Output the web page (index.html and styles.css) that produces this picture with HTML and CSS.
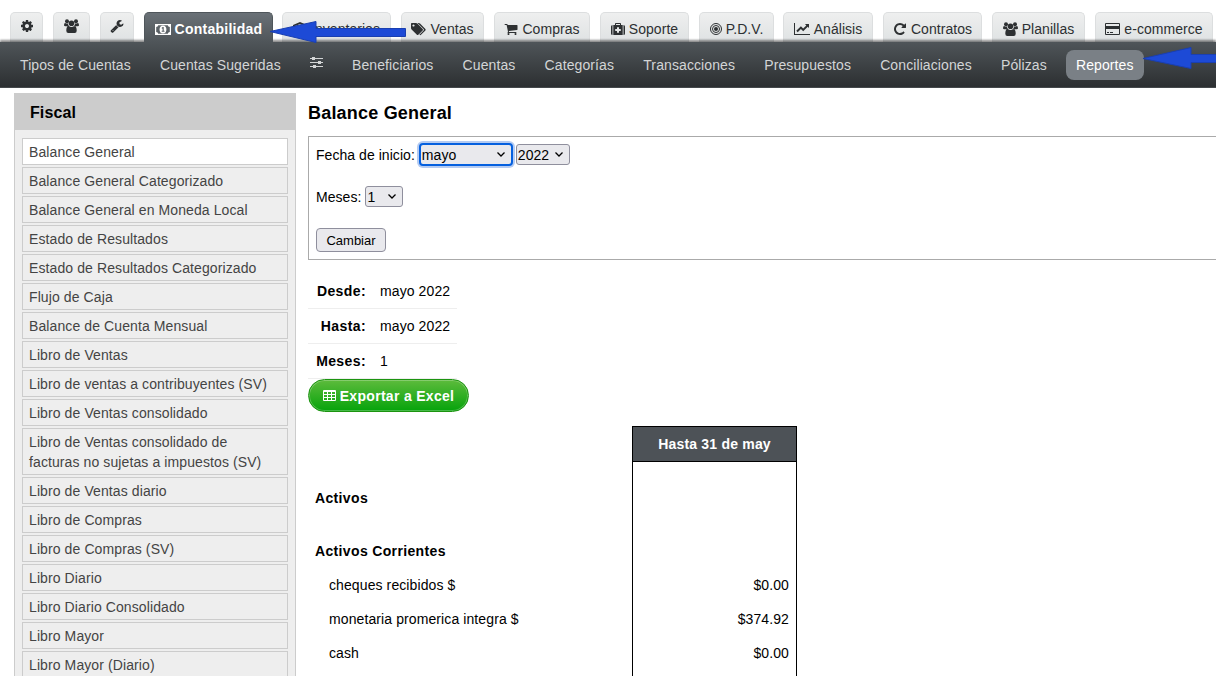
FILE: index.html
```html
<!DOCTYPE html>
<html lang="es">
<head>
<meta charset="UTF-8" />
<meta name="viewport" content="width=device-width, initial-scale=1" />
<title>Balance General</title>
<link rel="stylesheet" href="styles.css">
</head>
<body>
  <!-- Icons -->
  <svg class="sprite" aria-hidden="true">
    <symbol id="i-cog" viewBox="0 0 1792 1792"><path d="M1152 896q0-106-75-181t-181-75-181 75-75 181 75 181 181 75 181-75 75-181zm512-109v222q0 12-8 23t-20 13l-185 28q-19 54-39 91 35 50 107 138 10 12 10 25t-9 23q-27 37-99 108t-94 71q-12 0-26-9l-138-108q-44 23-91 38-16 136-29 186-7 28-36 28h-222q-14 0-24.5-8.5t-11.5-21.5l-28-184q-49-16-90-37l-141 107q-10 9-25 9-14 0-25-11-126-114-165-168-7-10-7-23 0-12 8-23 15-21 51-66.5t54-70.5q-27-50-41-99l-183-27q-13-2-21-12.5t-8-23.5v-222q0-12 8-23t19-13l186-28q14-46 39-92-40-57-107-138-10-12-10-24 0-10 9-23 26-36 98.5-107.5t94.5-71.5q13 0 26 10l138 107q44-23 91-38 16-136 29-186 7-28 36-28h222q14 0 24.5 8.5t11.5 21.5l28 184q49 16 90 37l142-107q9-9 24-9 13 0 25 10 129 119 165 170 7 8 7 22 0 12-8 23-15 21-51 66.5t-54 70.5q26 50 41 98l183 28q13 2 21 12.5t8 23.5z"/></symbol>
    <symbol id="i-users" viewBox="0 0 15 14"><circle cx="3" cy="2.3" r="2"/><circle cx="12" cy="2.3" r="2"/><circle cx="7.5" cy="4.2" r="2.800"/><path d="M0 6.200Q0 4 1.200 4q1.300.9 2.700.5Q4 6.200 5.200 7.200H1.500Q0 7.200 0 6.200zM15 6.200Q15 4 13.800 4q-1.300.9-2.700.5Q11 6.200 9.800 7.200h3.700Q15 7.200 15 6.200zM2.300 11.800Q2.300 7 4.600 7q2.900 2 5.800 0 2.300 0 2.300 4.800Q12.700 14 10.700 14H4.300Q2.300 14 2.300 11.800z"/></symbol>
    <symbol id="i-wrench" viewBox="0 0 1792 1792"><path d="M448 1472q0-26-19-45t-45-19-45 19-19 45 19 45 45 19 45-19 19-45zm644-420l-682 682q-37 37-90 37-52 0-91-37l-106-108q-38-36-38-90 0-53 38-91l681-681q39 98 114.500 173.500t173.500 114.500zm634-435q0 39-23 106-47 134-164.500 217.500t-258.500 83.500q-185 0-316.500-131.500t-131.500-316.500 131.500-316.500 316.500-131.500q58 0 121.500 16.500t107.500 46.500q16 11 16 28t-16 28l-293 169v224l193 107q5-3 79-48.500t135.500-81 70.500-35.500q15 0 23.500 10t8.500 25z"/></symbol>
    <symbol id="i-money" viewBox="0 0 16 11"><path fill-rule="evenodd" d="M0 0h16v11H0zM3.200 1.200Q3 2.800 1.200 3v5q1.800.2 2 1.800h9.600q.2-1.600 2-1.800V3q-1.800-.2-2-1.800z"/><path fill-rule="evenodd" d="M8 1.400c4.600 0 4.600 8.200 0 8.200s-4.600-8.200 0-8.200zM6.500 4l.7.700.4-.3v2.400h-.9v.9h2.800v-.9h-.8V3h-1z"/></symbol>
    <symbol id="i-cube" viewBox="0 0 14 14"><path d="M7 0l7 3v8l-7 3-7-3V3zM2 4l5 2 5-2-5-2z"/></symbol>
    <symbol id="i-tags" viewBox="0 0 15 13"><path fill-rule="evenodd" d="M.8 0H5q.7 0 1.300.6L11.700 6q.6.700 0 1.400l-4.400 4.400q-.7.600-1.400 0L.6 6.400Q0 5.800 0 5V.8Q0 0 .8 0zM2.500 1.400a1.100 1.100 0 1 0 .01 0z"/><path d="M6.500 0h1.200q.7 0 1.300.6L14.400 6q.6.700 0 1.400L10 11.800q-.8.700-1.600-.1l4.200-4.300q.7-.7 0-1.400z"/></symbol>
    <symbol id="i-cart" viewBox="0 0 1792 1792"><path d="M704 1536q0 52-38 90t-90 38-90-38-38-90 38-90 90-38 90 38 38 90zm896 0q0 52-38 90t-90 38-90-38-38-90 38-90 90-38 90 38 38 90zm128-1088v512q0 24-16.500 42.500t-40.500 21.500l-1044 122q13 60 13 70 0 16-24 64h920q26 0 45 19t19 45-19 45-45 19h-1024q-26 0-45-19t-19-45q0-11 8-31.500t16-36 21.500-40 15.500-29.500l-177-823h-204q-26 0-45-19t-19-45 19-45 45-19h256q16 0 28.500 6.500t19.500 15.500 13 24.500 8 26 5.500 29.500 4.500 26h1201q26 0 45 19t19 45z"/></symbol>
    <symbol id="i-medkit" viewBox="0 0 14 12"><path d="M0 3.500Q0 2 1.500 2v10Q0 12 0 10.500zM12.500 2Q14 2 14 3.500v7q0 1.500-1.500 1.500z"/><path fill-rule="evenodd" d="M2.300 2H4V.8Q4 0 4.800 0h4.400q.8 0 .8.800V2h1.700v10H2.300zM5 1v1h4V1zM6 4.200v1.700H4.200v2H6v1.800h2V7.900h1.800v-2H8V4.200z"/></symbol>
    <symbol id="i-bullseye" viewBox="0 0 12 12"><g fill="none" stroke="currentColor"><circle cx="6" cy="6" r="5.500"/><circle cx="6" cy="6" r="3.500"/></g><circle cx="6" cy="6" r="2"/></symbol>
    <symbol id="i-chart" viewBox="0 0 16 12"><path d="M0 0h1v11h15v1H0z"/><path d="M11 1h4v4l-1.300-1.200-4.500 4.400-2.300-2.200-3.200 3.200L2.300 7.800l4.600-4.500 2.300 2.200 3.100-3.100z"/></symbol>
    <symbol id="i-repeat" viewBox="0 0 1792 1792"><path d="M1664 256v448q0 26-19 45t-45 19h-448q-42 0-59-40-17-39 14-69l138-138q-148-137-349-137-104 0-198.500 40.500t-163.500 109.500-109.500 163.500-40.500 198.500 40.500 198.500 109.500 163.500 163.500 109.500 198.500 40.500q119 0 225-52t179-147q7-10 23-12 15 0 25 9l137 138q9 8 9.500 20.500t-7.500 22.500q-109 132-264 204.500t-327 72.500q-156 0-298-61t-245-164-164-245-61-298 61-298 164-245 245-164 298-61q147 0 284.500 55.500t244.500 156.500l130-129q29-31 70-14 39 17 39 59z"/></symbol>
    <symbol id="i-card" viewBox="0 0 15 12"><path fill-rule="evenodd" d="M1 0h13q1 0 1 1v10q0 1-1 1H1q-1 0-1-1V1q0-1 1-1zM1 1v2h13V1zM1 6v5h13V6z"/><path d="M2 9h2v1H2zM5 9h3v1H5z"/></symbol>
    <symbol id="i-sliders" viewBox="0 0 13 12"><path d="M0 1h13v1H0zM0 5h13v1H0zM0 9h13v1H0zM2 0h3v3H2zM8 4h3v3H8zM3 8h3v3H3z"/></symbol>
    <symbol id="i-table" viewBox="0 0 13 11"><path fill-rule="evenodd" d="M1 0h11q1 0 1 1v9q0 1-1 1H1q-1 0-1-1V1q0-1 1-1zM1 2v2h3V2zM5 2v2h3V2zM9 2v2h3V2zM1 5v2h3V5zM5 5v2h3V5zM9 5v2h3V5zM1 8v2h3V8zM5 8v2h3V8zM9 8v2h3V8z"/></symbol>
  </svg>

  <header class="header">
    <nav class="tabs">
      <a class="tab tab-config"><svg class="i14"><use href="#i-cog"/></svg></a>
      <a class="tab tab-users"><svg class="i15"><use href="#i-users"/></svg></a>
      <a class="tab tab-tools"><svg class="i14"><use href="#i-wrench"/></svg></a>
      <a class="tab tab-conta active"><svg class="i-money"><use href="#i-money"/></svg>Contabilidad</a>
      <a class="tab tab-inv"><svg class="i14"><use href="#i-cube"/></svg>Inventarios</a>
      <a class="tab tab-ventas"><svg class="i-tags"><use href="#i-tags"/></svg>Ventas</a>
      <a class="tab tab-compras"><svg class="i14"><use href="#i-cart"/></svg>Compras</a>
      <a class="tab tab-soporte"><svg class="i-kit"><use href="#i-medkit"/></svg>Soporte</a>
      <a class="tab tab-pdv"><svg class="i12"><use href="#i-bullseye"/></svg>P.D.V.</a>
      <a class="tab tab-analisis"><svg class="i-chart"><use href="#i-chart"/></svg>Análisis</a>
      <a class="tab tab-contratos"><svg class="i14"><use href="#i-repeat"/></svg>Contratos</a>
      <a class="tab tab-planillas"><svg class="i15"><use href="#i-users"/></svg>Planillas</a>
      <a class="tab tab-ecom"><svg class="i-card"><use href="#i-card"/></svg>e-commerce</a>
    </nav>
    <nav class="subnav">
      <a>Tipos de Cuentas</a>
      <a>Cuentas Sugeridas</a>
      <a class="sliders"><svg><use href="#i-sliders"/></svg></a>
      <a>Beneficiarios</a>
      <a>Cuentas</a>
      <a>Categorías</a>
      <a>Transacciones</a>
      <a>Presupuestos</a>
      <a>Conciliaciones</a>
      <a>Pólizas</a>
      <a class="selected">Reportes</a>
    </nav>
    <svg class="arrow arrow-conta" viewBox="0 0 136 22"><path d="M0 10.500L46 .5v7h89.500v8H46v6z"/></svg>
    <svg class="arrow arrow-reportes" viewBox="0 0 73 22"><path d="M0 11.500L48 .5v7h30v8H48v6z"/></svg>
  </header>

  <div class="page">
    <aside class="sidebar">
      <h2>Fiscal</h2>
      <ul>
        <li class="current">Balance General</li>
        <li>Balance General Categorizado</li>
        <li>Balance General en Moneda Local</li>
        <li>Estado de Resultados</li>
        <li>Estado de Resultados Categorizado</li>
        <li>Flujo de Caja</li>
        <li>Balance de Cuenta Mensual</li>
        <li>Libro de Ventas</li>
        <li>Libro de ventas a contribuyentes (SV)</li>
        <li>Libro de Ventas consolidado</li>
        <li>Libro de Ventas consolidado de facturas no sujetas a impuestos (SV)</li>
        <li>Libro de Ventas diario</li>
        <li>Libro de Compras</li>
        <li>Libro de Compras (SV)</li>
        <li>Libro Diario</li>
        <li>Libro Diario Consolidado</li>
        <li>Libro Mayor</li>
        <li>Libro Mayor (Diario)</li>
      </ul>
    </aside>

    <main class="content">
      <h1>Balance General</h1>
      <form class="filters">
        <div class="row">
          <label>Fecha de inicio:</label>
          <span class="select month focus">mayo<svg viewBox="0 0 8 5"><path d="M.5.500L4 4 7.500.500"/></svg></span>
          <span class="select year">2022<svg viewBox="0 0 8 5"><path d="M.5.500L4 4 7.500.500"/></svg></span>
        </div>
        <div class="row">
          <label>Meses:</label>
          <span class="select count">1<svg viewBox="0 0 8 5"><path d="M.5.500L4 4 7.500.500"/></svg></span>
        </div>
        <button type="button">Cambiar</button>
      </form>

      <dl class="summary">
        <div><dt>Desde:</dt><dd>mayo 2022</dd></div>
        <div><dt>Hasta:</dt><dd>mayo 2022</dd></div>
        <div><dt>Meses:</dt><dd>1</dd></div>
      </dl>
      <a class="export"><svg><use href="#i-table"/></svg>Exportar a Excel</a>

      <table class="report">
        <thead>
          <tr><th></th><th class="amount">Hasta 31 de may</th></tr>
        </thead>
        <tbody>
          <tr class="group first"><td>Activos</td><td class="amount"></td></tr>
          <tr class="group"><td>Activos Corrientes</td><td class="amount"></td></tr>
          <tr><td>cheques recibidos $</td><td class="amount">$0.00</td></tr>
          <tr><td>monetaria promerica integra $</td><td class="amount">$374.92</td></tr>
          <tr><td>cash</td><td class="amount">$0.00</td></tr>
          <tr><td></td><td class="amount"></td></tr>
        </tbody>
      </table>
    </main>
  </div>
</body>
</html>
```
FILE: styles.css
```css
* {
  box-sizing: border-box;
}
body {
  margin: 0;
  height: 676px;
  overflow: hidden;
  font-family: "Liberation Sans", Arial, sans-serif;
  font-size: 14px;
  letter-spacing: 0.1px;
  color: #000;
  background: #fff;
}
svg {
  fill: currentColor;
  flex: none;
}
.sprite {
  position: absolute;
  width: 0;
  height: 0;
}
/* Header tabs */
.header {
  position: relative;
  height: 88px;
}
.tabs {
  display: flex;
  gap: 10px;
  height: 42px;
  padding: 12px 0 0 10px;
}
.tab {
  display: flex;
  flex: none;
  align-items: center;
  justify-content: center;
  gap: 4px;
  height: 30px;
  padding-top: 3px;
  border: 1px solid #dcdedf;
  border-bottom: 0;
  border-radius: 5px 5px 0 0;
  background: linear-gradient(#eeefef, #dfe2e3);
  color: #2d3032;
  letter-spacing: 0.05px;
  white-space: nowrap;
}
.tab.active {
  position: relative;
  z-index: 2;
  border-color: #4f565b;
  background: linear-gradient(#6a7177, #4f5559);
  color: #fff;
  font-weight: bold;
  letter-spacing: 0.25px;
}
.tab-config, .tab-users, .tab-tools {
  padding: 0 0 3px;
}
.tab-config { width: 33px; }
.tab-users { width: 37px; }
.tab-tools { width: 34px; }
.tab-conta { width: 129px; }
.tab-inv { width: 109px; margin-left: -1px; }
.tab-ventas { width: 83px; }
.tab-compras { width: 96px; }
.tab-soporte { width: 89px; }
.tab-pdv { width: 75px; }
.tab-analisis { width: 90px; margin-left: -1px; }
.tab-contratos { width: 99px; }
.tab-planillas { width: 93px; }
.tab-ecom { width: 118px; }
.i14 { width: 14px; height: 14px; }
.i15 { width: 15px; height: 14px; }
.i12 { width: 12px; height: 12px; }
.i-money { width: 16px; height: 11px; }
.i-tags { width: 15px; height: 13px; }
.i-kit { width: 14px; height: 12px; }
.i-chart { width: 16px; height: 12px; }
.i-card { width: 15px; height: 12px; }
/* Second level */
.subnav {
  position: relative;
  display: flex;
  align-items: center;
  gap: 9.15px;
  height: 46px;
  padding-left: 10px;
  border-bottom: 1px solid #45494c;
  background: linear-gradient(#4f5559, #2c2f31);
  box-shadow: 0 -2px 2px rgba(0, 0, 0, 0.45);
  color: #d3d5d6;
}
.subnav a {
  height: 30px;
  padding: 0 10px;
  line-height: 30px;
  white-space: nowrap;
}
.subnav .sliders svg {
  display: block;
  width: 13px;
  height: 12px;
  margin-top: 7px;
}
.subnav .selected {
  border-radius: 8px;
  background: #7a8086;
  color: #fff;
}
/* Arrows pointing at the open section */
.arrow {
  position: absolute;
  z-index: 3;
  height: 22px;
  fill: #1d4ad6;
  stroke: #1a3fb0;
  stroke-width: 1;
}
.arrow-conta {
  left: 270px;
  top: 21px;
  width: 136px;
}
.arrow-reportes {
  left: 1143px;
  top: 47px;
  width: 73px;
}
/* Layout */
.page {
  display: flex;
  gap: 12px;
  padding: 5px 0 0 14px;
}
.sidebar {
  flex: none;
  width: 282px;
  border: 1px solid #ccc;
  background: #eee;
}
.sidebar h2 {
  height: 36px;
  margin: 0;
  padding-left: 15px;
  background: #ccc;
  font-size: 16px;
  line-height: 37px;
}
.sidebar ul {
  display: grid;
  gap: 2px;
  margin: 0;
  padding: 8px 7px;
  list-style: none;
}
.sidebar li {
  padding: 3px 16px 2px 6px;
  border: 1px solid #ccc;
  color: #444;
  line-height: 20px;
}
.sidebar .current {
  background: #fff;
}
/* Main column */
.content {
  flex: 1;
  min-width: 0;
}
.content h1 {
  height: 43px;
  margin: 0;
  font-size: 18px;
  letter-spacing: 0.2px;
  line-height: 41px;
}
.filters {
  height: 124px;
  padding: 7px;
  border: 1px solid #aaa;
  border-right: 0;
  letter-spacing: 0.05px;
}
.row {
  display: flex;
  align-items: center;
  height: 21px;
  margin-bottom: 21px;
}
.select {
  display: flex;
  align-items: center;
  justify-content: space-between;
  height: 21px;
  padding: 0 6px 0 1px;
  border: 1px solid #8f8f9d;
  border-radius: 3px;
  background: #e9e9ed;
}
.select svg {
  width: 8px;
  height: 5px;
  fill: none;
  stroke: #000;
  stroke-width: 1.3;
}
.month {
  width: 94px;
  margin: 0 3px 0 4px;
}
.focus {
  height: 23px;
  padding: 0 6px 0 1px;
  border: 2px solid #0560df;
  border-radius: 4px;
  box-shadow: 0 0 0 2px #b4cbf2;
}
.year { width: 54px; }
.count { width: 38px; margin-left: 4px; }
.filters button {
  display: block;
  width: 70px;
  height: 24px;
  padding: 0;
  border: 1px solid #8f8f9d;
  border-radius: 4px;
  background: #e9e9ed;
  color: #000;
  font: 13px "Liberation Sans", Arial, sans-serif;
}
.summary {
  width: 149px;
  margin: 14px 0 0;
}
.summary div {
  display: flex;
  gap: 14px;
  height: 35px;
  border-bottom: 1px solid #eee;
  line-height: 34px;
}
.summary dt {
  width: 58px;
  text-align: right;
  font-weight: bold;
  letter-spacing: 0.4px;
}
.summary dd {
  margin: 0;
}
.export {
  display: flex;
  align-items: center;
  justify-content: center;
  gap: 4px;
  width: 161px;
  height: 33px;
  border: 1px solid #1c9410;
  border-radius: 17px;
  background: linear-gradient(#5dbb3c, #06a30b);
  box-shadow: inset 0 0 0 1px rgba(255, 255, 255, 0.25);
  color: #fff;
  font-weight: bold;
  letter-spacing: 0.3px;
}
.export svg {
  width: 13px;
  height: 11px;
}
/* Report */
.report {
  width: 489px;
  margin-top: 14px;
  border-collapse: separate;
  border-spacing: 0;
  table-layout: fixed;
}
.report th, .report td {
  height: 34px;
  padding: 0 0 0 21px;
}
.report .amount {
  width: 165px;
  padding: 0 7px 0 0;
  border: solid #000;
  border-width: 0 1px;
  text-align: right;
}
.report th.amount {
  height: 36px;
  padding: 0;
  border-width: 1px;
  background: #4d5257;
  color: #fff;
  text-align: center;
  letter-spacing: 0.2px;
}
.report .group td {
  height: 34px;
  padding-bottom: 1px;
  padding-left: 7px;
  font-weight: bold;
  letter-spacing: 0.35px;
}
.report .first td {
  height: 72px;
}
```
